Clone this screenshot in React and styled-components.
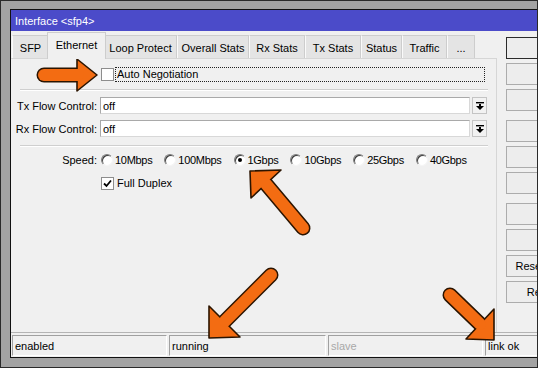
import React from "react";
import styled, { createGlobalStyle } from "styled-components";

const GlobalStyle = createGlobalStyle`
  html, body {
    margin: 0;
    padding: 0;
    background: #a3a3a3;
  }
  body {
    font-family: "Liberation Sans", Arial, sans-serif;
    font-size: 11px;
    color: #000;
  }
`;

const Frame = styled.div`
  position: relative;
  width: 538px;
  height: 368px;
  box-sizing: border-box;
  border: 1px solid #2a2a2a;
  background: #a3a3a3;
  padding: 8px 0 0 9px;
  overflow: hidden;
`;

const Window = styled.div`
  width: 640px;
  border: 1px solid #111;
  background: #f0f0f0;
  display: flex;
  flex-direction: column;
`;

const TitleBar = styled.div`
  height: 21px;
  background: #4b4bc9;
  color: #fff;
  display: flex;
  align-items: center;
  padding-left: 4px;
  font-size: 11px;
`;

const Main = styled.div`
  display: flex;
  height: 301px;
`;

const LeftSide = styled.div`
  width: 486px;
  display: flex;
  flex-direction: column;
  padding-top: 4px;
  box-sizing: border-box;
`;

const TabRow = styled.div`
  display: flex;
  align-items: flex-end;
  height: 23px;
  padding-left: 1px;
  position: relative;
  z-index: 1;
`;

const Tab = styled.div`
  box-sizing: border-box;
  width: ${p => (p.active ? p.w + 4 : p.w)}px;
  height: ${p => (p.active ? 27 : 23)}px;
  margin: 0 ${p => (p.active ? -2 : 0)}px ${p => (p.active ? -1 : 0)}px;
  display: flex;
  align-items: center;
  justify-content: center;
  padding: ${p => (p.active ? "0 0 3px" : "1px 0 0")};
  background: ${p => (p.active ? "#f0f0f0" : "#e4e4e4")};
  border: 1px solid #cdcdcd;
  border-left-color: ${p => (p.active ? "#cdcdcd" : "#fafafa")};
  border-bottom: none;
  position: relative;
  z-index: ${p => (p.active ? 2 : 1)};
  white-space: nowrap;
`;

const Panel = styled.div`
  flex: 1;
  border-top: 1px solid #d6d6d6;
  border-right: 1px solid #d6d6d6;
  padding: 7px 9px 0 0;
`;

const FormRow = styled.div`
  display: grid;
  grid-template-columns: 86px 1fr;
  column-gap: 3px;
  align-items: center;
  height: ${p => p.h}px;
  margin-top: ${p => p.mt}px;
`;

const Label = styled.span`
  text-align: right;
  white-space: nowrap;
`;

const Separator = styled.div`
  height: 1px;
  background: #cfcfcf;
  border-bottom: 1px solid #fff;
  margin: ${p => p.mt}px -1px 0 9px;
`;

const Inline = styled.div`
  display: flex;
  align-items: center;
  height: 100%;
`;

const Box = styled.div`
  box-sizing: border-box;
  width: 13px;
  height: 13px;
  margin-left: 1px;
  background: #fff;
  border: 1px solid #8d8d8d;
  display: flex;
  align-items: center;
  justify-content: center;
  flex-shrink: 0;
`;

const FocusLabel = styled.div`
  flex: 1;
  box-sizing: border-box;
  height: 15px;
  margin: 0 2px 0 1px;
  padding-left: 1px;
  border: 1px dotted #222;
  display: flex;
  align-items: center;
`;

const FieldWrap = styled.div`
  display: flex;
  gap: 2px;
  height: 17px;
`;

const TextField = styled.div`
  flex: 1;
  box-sizing: border-box;
  background: #fff;
  border: 1px solid #a9a9a9;
  border-right-color: #d8d8d8;
  border-bottom-color: #d8d8d8;
  padding-left: 2px;
  display: flex;
  align-items: center;
`;

const DropButton = styled.div`
  width: 15px;
  box-sizing: border-box;
  border: 1px solid #c4c4c4;
  background: #f2f2f2;
  display: flex;
  align-items: center;
  justify-content: center;
`;

const RadioGroup = styled.div`
  display: flex;
  align-items: center;
  gap: 11px;
  height: 100%;
`;

const RadioItem = styled.div`
  display: flex;
  align-items: center;
  gap: 2px;
  letter-spacing: -0.3px;
`;

const RadioDot = styled.div`
  box-sizing: border-box;
  width: 12px;
  height: 12px;
  margin-left: 1px;
  border-radius: 50%;
  background: #fff;
  border: 1px solid;
  border-color: #7c7c7c #f4f4f4 #f4f4f4 #7c7c7c;
  box-shadow: inset 1px 1px 0 #3c3c3c;
  display: flex;
  align-items: center;
  justify-content: center;

  &::after {
    content: "";
    width: 4px;
    height: 4px;
    border-radius: 50%;
    background: ${p => (p.on ? "#000" : "transparent")};
  }
`;

const CheckLine = styled.div`
  display: flex;
  align-items: center;
  gap: 3px;
`;

const ButtonCol = styled.div`
  display: flex;
  flex-direction: column;
  gap: 4px;
  width: 118px;
  margin-left: 9px;
  padding-top: 6px;
`;

const SideButton = styled.div`
  box-sizing: border-box;
  height: 22px;
  margin-top: ${p => (p.groupStart ? 5 : 0)}px;
  border: 1px solid ${p => (p.primary ? "#2b2b2b" : "#acacac")};
  background: #ededed;
  display: flex;
  align-items: center;
  justify-content: center;
  white-space: nowrap;
`;

const StatusBar = styled.div`
  display: grid;
  grid-template-columns: 155px 157px 155px 1fr;
  column-gap: 2px;
  height: 25px;
  box-sizing: border-box;
  border-top: 1px solid #b4b4b4;
  padding: 2px 0 1px 1px;
`;

const StatusField = styled.div`
  box-sizing: border-box;
  border-top: 1px solid #a0a0a0;
  border-left: 1px solid #a0a0a0;
  border-right: 1px solid #fff;
  border-bottom: 1px solid #fff;
  padding-left: 2px;
  display: flex;
  align-items: center;
  color: ${p => (p.dim ? "#a8a8a8" : "#000")};
`;

const Overlay = styled.svg`
  position: absolute;
  top: -1px;
  left: -1px;
  pointer-events: none;
`;

const ORANGE = "#f36c12";
const OUTLINE = "#2b1400";

const tabs = [
  { label: "SFP", w: 37 },
  { label: "Ethernet", w: 55, active: true },
  { label: "Loop Protect", w: 73 },
  { label: "Overall Stats", w: 72 },
  { label: "Rx Stats", w: 56 },
  { label: "Tx Stats", w: 56 },
  { label: "Status", w: 41 },
  { label: "Traffic", w: 45 },
  { label: "...", w: 28 },
];

const speeds = ["10Mbps", "100Mbps", "1Gbps", "10Gbps", "25Gbps", "40Gbps"];

// only the last two labels reach into the visible strip of the column
const buttons = [
  { id: "ok", primary: true },
  { id: "cancel" },
  { id: "apply" },
  { id: "disable", groupStart: true },
  { id: "comment" },
  { id: "torch" },
  { id: "cable", groupStart: true },
  { id: "blink" },
  { id: "mac", label: "Reset MAC Address" },
  { id: "counters", label: "Reset Counters" },
];

const arrows = [
  { tail: [44, 75], mid: [78, 75], head: "77,59 77,91 97,75" },
  { tail: [303, 228], mid: [266, 184], head: "250,171 251,198 281,170" },
  { tail: [271, 275], mid: [225, 321], head: "209,338 209,306 240,337" },
  { tail: [450, 295], mid: [480, 324], head: "494,340 494,309 466,339" },
];

const DropIcon = () => (
  <svg width="8" height="8" viewBox="0 0 8 8">
    <rect x="0" y="0" width="8" height="1.4" fill="#000" />
    <rect x="3" y="2" width="2" height="2" fill="#000" />
    <polygon points="0,4 8,4 4,8" fill="#000" />
  </svg>
);

const Check = () => (
  <svg width="9" height="9" viewBox="0 0 9 9">
    <polyline points="1,4.5 3.5,7 8,1.5" fill="none" stroke="#000" strokeWidth="1.8" />
  </svg>
);

const Arrow = ({ tail, mid, head }) => (
  <g>
    <line x1={tail[0]} y1={tail[1]} x2={mid[0]} y2={mid[1]} stroke={OUTLINE} strokeWidth="15" strokeLinecap="round" />
    <polygon points={head} fill={ORANGE} stroke={OUTLINE} strokeWidth="1.6" strokeLinejoin="round" />
    <line x1={tail[0]} y1={tail[1]} x2={mid[0]} y2={mid[1]} stroke={ORANGE} strokeWidth="12" strokeLinecap="round" />
  </g>
);

const App = () => (
  <>
    <GlobalStyle />
    <Frame>
      <Window>
        <TitleBar>Interface &lt;sfp4&gt;</TitleBar>
        <Main>
          <LeftSide>
            <TabRow>
              {tabs.map(t => (
                <Tab key={t.label} w={t.w} active={t.active}>
                  {t.label}
                </Tab>
              ))}
            </TabRow>
            <Panel>
              <FormRow h={16} mt={0}>
                <span />
                <Inline>
                  <Box />
                  <FocusLabel>Auto Negotiation</FocusLabel>
                </Inline>
              </FormRow>
              <Separator mt={7} />
              <FormRow h={17} mt={6}>
                <Label>Tx Flow Control:</Label>
                <FieldWrap>
                  <TextField>off</TextField>
                  <DropButton>
                    <DropIcon />
                  </DropButton>
                </FieldWrap>
              </FormRow>
              <FormRow h={17} mt={6}>
                <Label>Rx Flow Control:</Label>
                <FieldWrap>
                  <TextField>off</TextField>
                  <DropButton>
                    <DropIcon />
                  </DropButton>
                </FieldWrap>
              </FormRow>
              <Separator mt={8} />
              <FormRow h={17} mt={4}>
                <Label>Speed:</Label>
                <RadioGroup>
                  {speeds.map(s => (
                    <RadioItem key={s}>
                      <RadioDot on={s === "1Gbps"} />
                      {s}
                    </RadioItem>
                  ))}
                </RadioGroup>
              </FormRow>
              <FormRow h={16} mt={7}>
                <span />
                <CheckLine>
                  <Box>
                    <Check />
                  </Box>
                  Full Duplex
                </CheckLine>
              </FormRow>
            </Panel>
          </LeftSide>
          <ButtonCol>
            {buttons.map(b => (
              <SideButton key={b.id} primary={b.primary} groupStart={b.groupStart}>
                {b.label}
              </SideButton>
            ))}
          </ButtonCol>
        </Main>
        <StatusBar>
          <StatusField>enabled</StatusField>
          <StatusField>running</StatusField>
          <StatusField dim>slave</StatusField>
          <StatusField>link ok</StatusField>
        </StatusBar>
      </Window>
      <Overlay width="538" height="368" viewBox="0 0 538 368">
        {arrows.map((a, i) => (
          <Arrow key={i} {...a} />
        ))}
      </Overlay>
    </Frame>
  </>
);

export default App;
